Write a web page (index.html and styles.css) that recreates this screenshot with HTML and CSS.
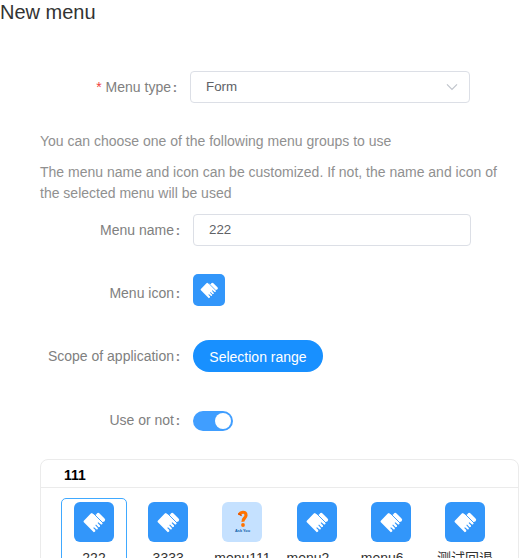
FILE: index.html
```html
<!DOCTYPE html>
<html lang="en">
<head>
<meta charset="utf-8">
<title>New menu</title>
<link rel="stylesheet" href="styles.css">
</head>
<body>
<svg width="0" height="0" class="defs">
  <symbol id="hands" viewBox="0 0 40 40">
    <path fill="#fff" d="M9.6 19 16.8 11.5 18 11 19.3 12.2 20.2 12 28.5 20.3 28.6 21.6 28 22.6 27 22.6 24.3 20.2 23.6 20.9 26 23.6 26 24.8 24.6 25.2 22 22.6 21.3 23.3 23.8 25.9 23.8 27.3 22.6 27.5 20 25.2 19.2 25.9 21.3 28 21.2 29.5 19.8 30.2 9.6 20Z"/>
    <path stroke="#fff" stroke-width="3.8" stroke-linecap="round" d="M24.2 12.8 29.2 17.8"/>
    <path stroke="#fff" stroke-width="1.6" stroke-linecap="round" d="M22.2 13.2 28.2 19.2"/>
    <path stroke="#3296fa" stroke-width=".9" d="M20 12 29 21"/>
  </symbol>
</svg>
<main class="page">
  <h1 class="title">New menu</h1>
  <div class="row type"><label class="label"><span class="star">*</span> Menu type<span class="colon">:</span></label>
    <div class="field select">Form<svg class="chevron" width="12" height="8" viewBox="0 0 12 8"><path d="M1 1.3 6 6.3 11 1.3" fill="none" stroke="#c0c4cc" stroke-width="1.2"/></svg></div>
  </div>
  <p class="hint">You can choose one of the following menu groups to use</p>
  <p class="hint second">The menu name and icon can be customized. If not, the name and icon of the selected menu will be used</p>
  <div class="row name"><label class="label">Menu name<span class="colon">:</span></label><div class="field">222</div></div>
  <div class="row icon"><label class="label">Menu icon<span class="colon">:</span></label><div class="tile small"><svg viewBox="0 0 40 40"><use href="#hands"/></svg></div></div>
  <div class="row scope"><label class="label">Scope of application<span class="colon">:</span></label><button class="button">Selection range</button></div>
  <div class="row use"><label class="label">Use or not<span class="colon">:</span></label><div class="switch"></div></div>
  <section class="group">
    <h2 class="group-title">111</h2>
    <div class="items">
      <div class="item selected"><div class="tile"><svg viewBox="0 0 40 40"><use href="#hands"/></svg></div><span class="caption">222</span></div>
      <div class="item"><div class="tile"><svg viewBox="0 0 40 40"><use href="#hands"/></svg></div><span class="caption">3333</span></div>
      <div class="item"><div class="tile pale"><svg viewBox="0 0 40 40"><path d="M17.6 13.2C17.8 9.8 24 8.8 24 13.2C24 16.4 20.4 16.3 21 19.8" fill="none" stroke="#ff7300" stroke-width="3.2"/><path d="M16.3 11.4 19.6 13.8" stroke="#d84b08" stroke-width="1.2"/><circle cx="21" cy="23" r="1.9" fill="#ff7300"/><text x="13" y="30" class="logo-text" textLength="15" lengthAdjust="spacingAndGlyphs">Ask You</text></svg></div><span class="caption">menu111</span></div>
      <div class="item"><div class="tile"><svg viewBox="0 0 40 40"><use href="#hands"/></svg></div><span class="caption start">menu2</span></div>
      <div class="item"><div class="tile"><svg viewBox="0 0 40 40"><use href="#hands"/></svg></div><span class="caption start">menu6</span></div>
      <div class="item"><div class="tile"><svg viewBox="0 0 40 40"><use href="#hands"/></svg></div><span class="caption">测试回退</span></div>
    </div>
  </section>
</main>
</body>
</html>
```

FILE: styles.css
```css
* { box-sizing: border-box; }
body { margin: 0; background: #fff; font: 14px/21px "Liberation Sans", "Noto Sans CJK SC", sans-serif; color: #888; overflow: hidden; }
.defs { position: absolute; }
.page { height: 558px; overflow: hidden; }
.title { margin: 0; height: 71px; font-size: 20px; line-height: 24px; font-weight: 400; color: #333; }
.row { display: flex; align-items: flex-start; }
.label { width: 180px; margin-right: 13px; text-align: right; line-height: 32px; white-space: nowrap; color: #808080; }
.colon { display: inline-block; width: 6px; text-align: right; font-weight: 700; font-size: 13px; }
.star { color: #f04040; }
.type { height: 60px; }
.type .label { width: 177px; }
.field { display: flex; align-items: center; justify-content: space-between; width: 278px; height: 32px; padding: 0 11px 2px 15px; border: 1px solid #dcdfe6; border-radius: 4px; color: #606266; font-size: 13.3333px; }
.select { width: 280px; }
.chevron { margin-top: 1px; }
.hint { width: 470px; margin: 0 0 10px 40px; color: #909090; }
.hint.second { margin-bottom: 10px; }
.name { height: 60px; }
.icon { height: 66px; }
.icon .label { line-height: 38px; }
.tile { width: 40px; height: 40px; border-radius: 6px; background: #3296fa; flex: none; }
.tile svg { display: block; width: 100%; height: 100%; }
.small { width: 32px; height: 32px; border-radius: 5px; }
.scope { height: 71px; }
.button { width: 130px; height: 32px; border: 0; border-radius: 16px; padding: 2px 0 0; background: #1890ff; color: #fff; font: 14px "Liberation Sans", sans-serif; }
.use { height: 48px; }
.use .label { line-height: 19px; }
.switch { width: 40px; height: 20px; padding: 2px; border-radius: 10px; background: #409eff; }
.switch::after { content: ""; display: block; width: 16px; height: 16px; margin-left: auto; border-radius: 50%; background: #fff; }
.pale { background: #c5e1ff; }
.group { width: 479px; margin-left: 40px; height: 160px; border: 1px solid #ebebeb; border-radius: 8px; color: #000; }
.group-title { margin: 0; height: 28px; padding: 3px 0 0 23px; border-bottom: 1px solid #ebebeb; font-size: 14px; line-height: 24px; }
.items { display: flex; gap: 8.2px; padding: 10px 0 0 20px; }
.item { display: flex; flex-direction: column; align-items: center; width: 66px; height: 76px; padding-top: 3px; border: 1px solid transparent; border-radius: 5px; color: #333; flex: none; }
.selected { border-color: #40a9ff; }
.caption { margin-top: 6px; width: 60px; text-align: center; white-space: nowrap; }
.start { text-align: left; }
.logo-text { font: bold 4px "Liberation Sans", sans-serif; fill: #075ca8; }
```
